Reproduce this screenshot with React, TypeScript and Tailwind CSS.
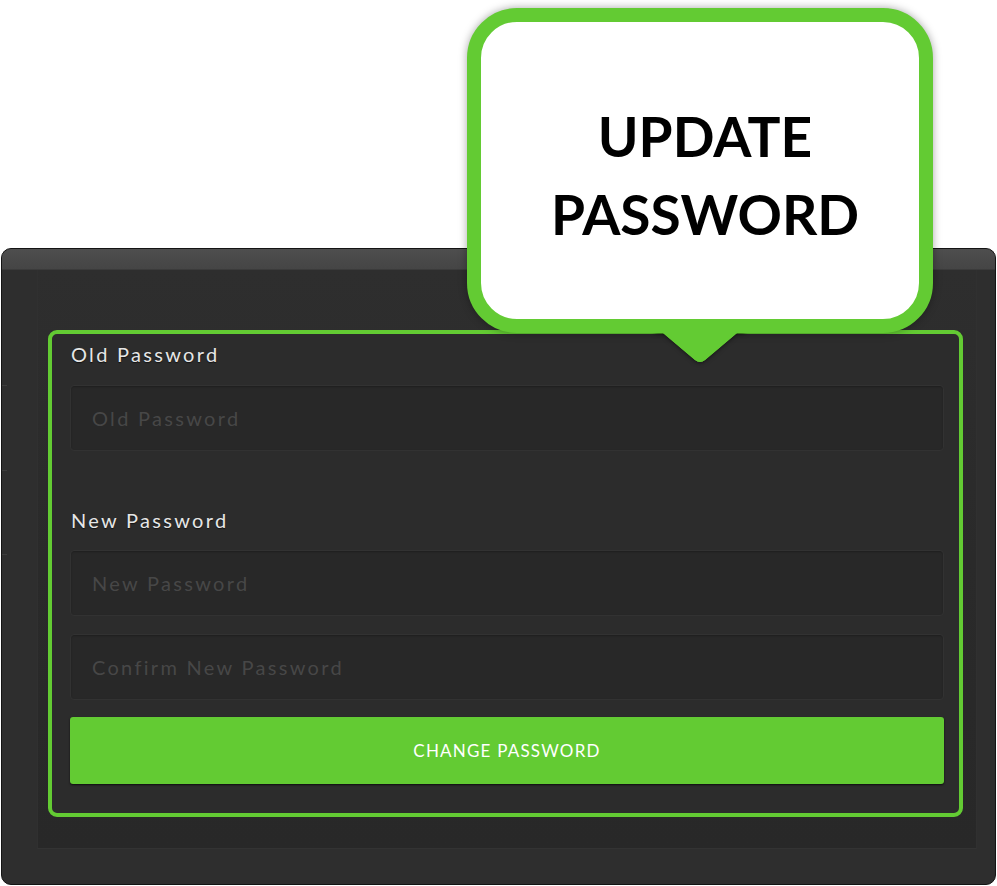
import { useState } from 'react';

const fields = {
  old: 'Old Password',
  next: 'New Password',
  confirm: 'Confirm New Password',
};

function Field({ placeholder, value, onChange }: { placeholder: string; value: string; onChange: (v: string) => void }) {
  return (
    <input
      type="password"
      value={value}
      onChange={(e) => onChange(e.target.value)}
      placeholder={placeholder}
      className="block w-full h-[66px] rounded-[4px] border border-[#323232] bg-[#282828] px-[21px] text-[20px] tracking-[2.3px] text-[#ddd] placeholder:text-[#474747] outline-none shadow-[inset_0_1px_2px_rgba(0,0,0,0.25)]"
    />
  );
}

// tail of the callout, drawn twice: once under the bubble with its shadow, once over it
const tailPath = 'M0 0 H90 V14 H82 L50 41 Q45 45 40 41 L8 14 H0 Z';

export default function App() {
  const [values, setValues] = useState({ old: '', next: '', confirm: '' });

  return (
    <div className="relative w-[997px] h-[886px] bg-white overflow-hidden font-['Lato',_'Open_Sans',_sans-serif]">
      {/* window */}
      <div className="pt-[248px] px-[1px]">
        <div className="h-[637px] rounded-[10px] border border-[#141414] bg-[#2e2e2e] flex flex-col overflow-hidden">
          <div className="h-[21px] bg-gradient-to-b from-[#4e4e4e] to-[#454545] border-b border-[#3b3b3b]" />
          <div className="flex flex-1 pr-[18px] pb-[35px]">
            {/* cut-off side menu */}
            <div className="w-[35px] flex flex-col">
              <div className="h-[115px]" />
              <div className="w-[5px] h-px bg-[#3d3d3d]" />
              <div className="h-[84px]" />
              <div className="w-[5px] h-px bg-[#3d3d3d]" />
              <div className="h-[83px]" />
              <div className="w-[5px] h-px bg-[#3d3d3d]" />
            </div>
            <div className="flex-1 bg-gradient-to-b from-[#2e2e2e] via-[#2a2a2a] to-[#282828] border-x border-b border-x-[#303030] border-b-[#333] pl-[10px] pr-[13px] pt-[60px] pb-[31px]">
              <div className="h-full rounded-[9px] border-4 border-[#63cb33] bg-[#2c2c2c] pl-[18px] pr-[15px] pt-[8px]">
                <div className="h-[24px] leading-[24px] pl-[1px] text-[20px] tracking-[2.3px] text-[#e6e6e6] [text-shadow:0_1px_1px_rgba(0,0,0,0.6)]">
                  Old Password
                </div>
                <div className="mt-[19px]">
                  <Field placeholder={fields.old} value={values.old} onChange={(v) => setValues({ ...values, old: v })} />
                </div>
                <div className="mt-[57px] h-[24px] leading-[24px] pl-[1px] text-[20px] tracking-[2.3px] text-[#e6e6e6] [text-shadow:0_1px_1px_rgba(0,0,0,0.6)]">
                  New Password
                </div>
                <div className="mt-[18px] flex flex-col gap-[18px]">
                  <Field placeholder={fields.next} value={values.next} onChange={(v) => setValues({ ...values, next: v })} />
                  <Field placeholder={fields.confirm} value={values.confirm} onChange={(v) => setValues({ ...values, confirm: v })} />
                </div>
                <button className="mt-[17px] w-full h-[67px] rounded-[3px] bg-[#63cb33] text-white text-[17px] tracking-[1.2px] shadow-[0_1px_2px_rgba(0,0,0,0.7)] cursor-pointer">
                  CHANGE PASSWORD
                </button>
              </div>
            </div>
          </div>
        </div>
      </div>

      {/* callout bubble */}
      <svg className="absolute left-[655px] top-[319px] drop-shadow-[0_1px_2px_rgba(0,0,0,0.5)]" width="90" height="48" viewBox="0 0 90 48">
        <path d={tailPath} fill="#63cb33" />
      </svg>
      <div className="absolute left-[467px] top-[8px] w-[466px] h-[325px] rounded-[50px] border-[14px] border-[#63cb33] bg-white shadow-[0_0_8px_rgba(0,0,0,0.35)] flex items-center justify-center pl-[10px] pt-[8px]">
        <div className="text-center text-black font-bold text-[55px] leading-[78px]">
          UPDATE
          <br />
          PASSWORD
        </div>
      </div>
      <svg className="absolute left-[655px] top-[319px]" width="90" height="48" viewBox="0 0 90 48">
        <path d={tailPath} fill="#63cb33" />
      </svg>
    </div>
  );
}
